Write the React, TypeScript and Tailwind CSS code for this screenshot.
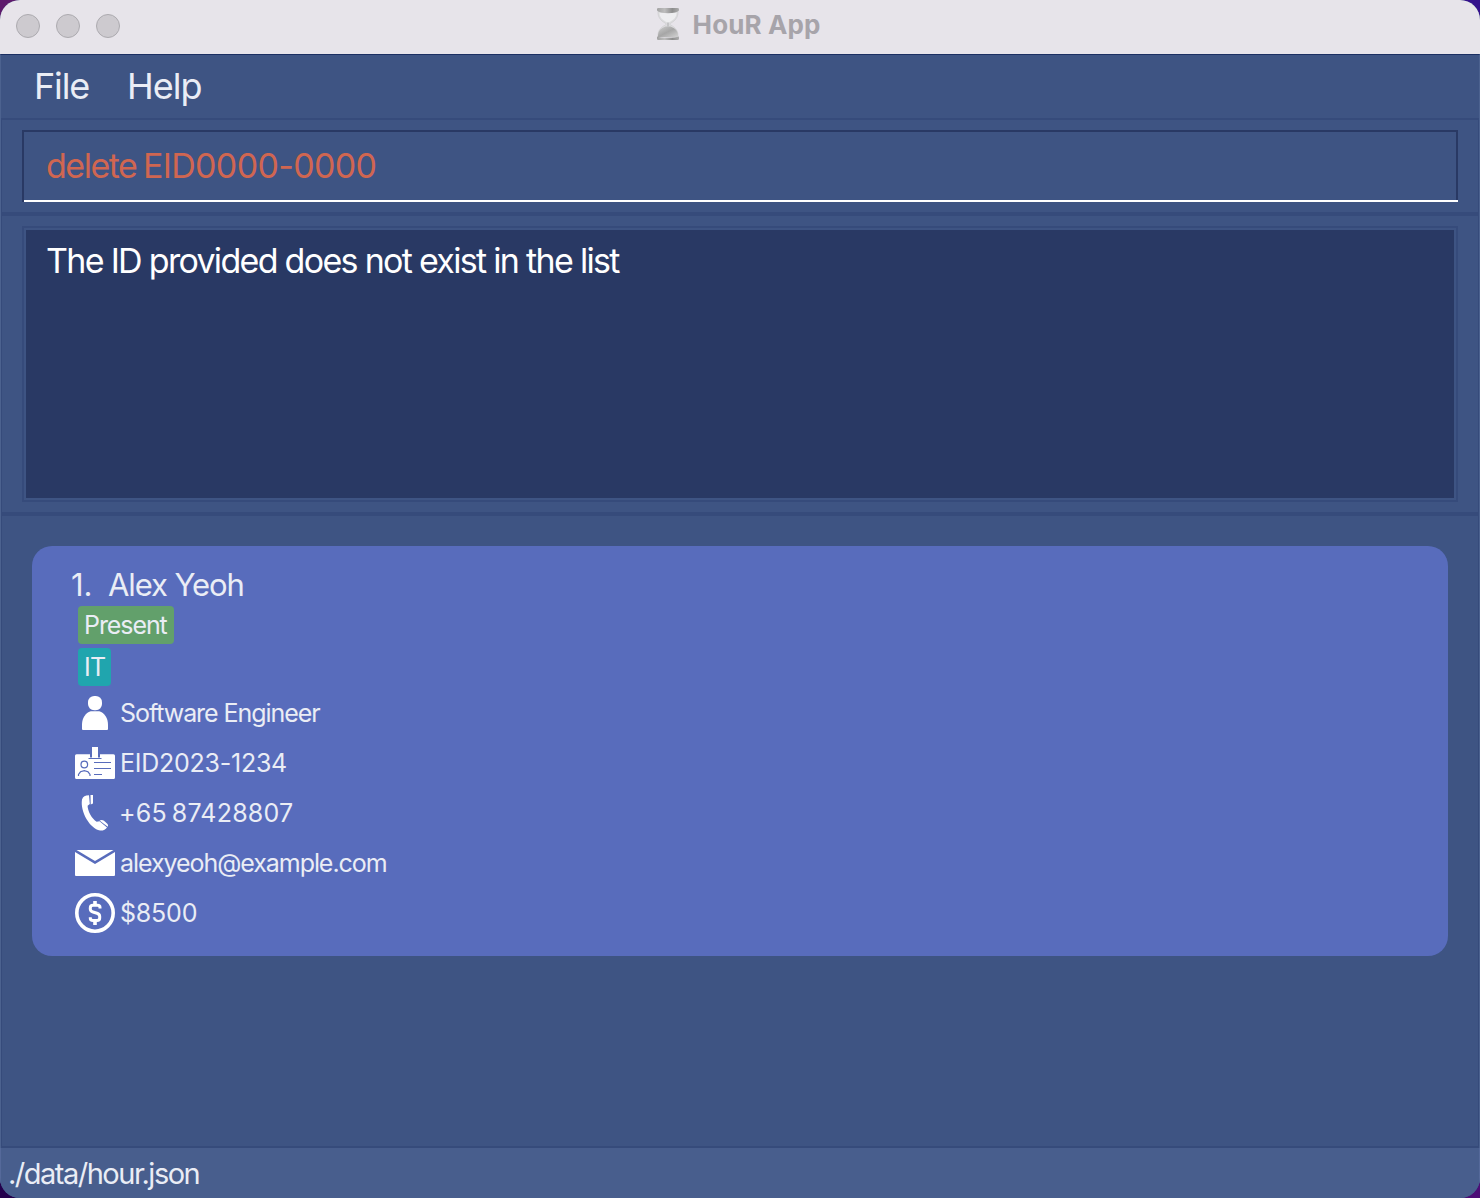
import React from "react";

function Hourglass() {
  return (
    <svg width="24" height="34" viewBox="0 0 24 34" aria-hidden="true">
      <defs>
        <linearGradient id="cap" x1="0" x2="1" y1="0" y2="0">
          <stop offset="0" stopColor="#a3a3a3" />
          <stop offset="0.35" stopColor="#bdbdbd" />
          <stop offset="0.7" stopColor="#8d8d8d" />
          <stop offset="1" stopColor="#adadad" />
        </linearGradient>
        <linearGradient id="sand" x1="0" x2="1" y1="0" y2="1">
          <stop offset="0" stopColor="#cccccc" />
          <stop offset="0.5" stopColor="#a6a6a6" />
          <stop offset="1" stopColor="#d2d2d2" />
        </linearGradient>
      </defs>
      <path
        d="M2 4C1.500 10 4.500 13.500 9 16C10.400 16.800 10.400 17.400 9 18.200C4.500 20.500 1.500 24 2 30H22C22.500 24 19.500 20.500 15 18.200C13.600 17.400 13.600 16.800 15 16C19.500 13.500 22.500 10 22 4Z"
        fill="#dcdcde"
        stroke="#cbcbcd"
        strokeWidth="0.6"
      />
      <path d="M3.500 6H20.500C20.500 11 16.500 13.500 12 16C7.500 13.500 3.500 11 3.500 6Z" fill="#eeeef0" />
      <path d="M2 30C1.500 24 5 21 9.500 19.500H14.500C19 21 22.500 24 22 30Z" fill="url(#sand)" />
      <path d="M11 15.500H13V20H11Z" fill="#c4c4c6" />
      <path d="M1 2Q1 1 2.500 1H21.500Q23 1 23 2V3.600Q20 6.200 12 6.200T1 3.600Z" fill="url(#cap)" />
      <path d="M1 29.500Q4 30.800 12 30.800T23 29.500V32Q23 33 21.500 33H2.500Q1 33 1 32Z" fill="url(#cap)" />
    </svg>
  );
}

function PersonIcon() {
  return (
    <svg width="40" height="40" viewBox="0 0 40 40" fill="white" aria-hidden="true">
      <rect x="13" y="3" width="14" height="14.300" rx="6.200" />
      <path d="M15.700 18.300H24.300C29.500 19.800 33 25.500 33 31.500V36Q33 37 32 37H8Q7 37 7 36V31.500C7 25.500 10.500 19.800 15.700 18.300Z" />
    </svg>
  );
}

function BadgeIcon() {
  return (
    <svg width="40" height="40" viewBox="0 0 40 40" aria-hidden="true">
      <path d="M1.500 11.300H15V14.500H25V11.300H38.500Q40 11.300 40 12.800V34.500Q40 36 38.500 36H1.500Q0 36 0 34.500V12.800Q0 11.300 1.500 11.300Z" fill="white" />
      <rect x="17" y="4" width="6" height="11" fill="white" />
      <g fill="none" stroke="#586cbc" strokeWidth="1.200">
        <path d="M13.500 15.500H26.500M19 19.500H36M19 25.500H36M19 31.500H27" />
        <circle cx="9.300" cy="21.500" r="3.300" />
        <path d="M3.500 33V31.500L5.500 28.800L9.300 27.600L13 28.800L15 31.500V33" />
      </g>
    </svg>
  );
}

function PhoneIcon() {
  return (
    <svg width="40" height="40" viewBox="0 0 40 40" fill="white" aria-hidden="true">
      <path d="M7 6.500C8 3.500 10 2.200 14 2.200L14.800 11L12.600 12.700C12.600 18 17 26 21.700 28.700L24.500 28.200L32 34.500C30.500 36.500 28.500 37.800 25 37.600C15 35.500 5 19 7 6.500Z" />
      <path d="M15.500 2H18V10.500L15.700 11.500Z" />
      <path d="M24.500 27.600C26 26.800 27.500 26.800 29 27.700L32.500 31Q33.500 32.300 32.800 33.700Z" />
    </svg>
  );
}

function MailIcon() {
  return (
    <svg width="40" height="40" viewBox="0 0 40 40" fill="white" aria-hidden="true">
      <path d="M1.500 7H38.500L20 18Z" />
      <path d="M0 9L20 21L40 9V32Q40 33 39 33H1Q0 33 0 32Z" />
    </svg>
  );
}

function DollarIcon() {
  return (
    <svg width="40" height="40" viewBox="0 0 40 40" fill="none" stroke="white" aria-hidden="true">
      <circle cx="20" cy="20" r="18.200" strokeWidth="3.600" />
      <path d="M25 15.500V14.500Q25 12.300 22.500 12.300H18Q15.300 12.300 15.300 15V16Q15.300 18.300 18 19L22 20.300Q24.700 21.200 24.700 23.500V25Q24.700 27.600 22 27.600H18Q15.300 27.600 15.300 25.300V24.300" strokeWidth="3" />
      <path d="M20 8V13M20 27V32" strokeWidth="3.600" />
    </svg>
  );
}

const details = [
  { Icon: PersonIcon, text: "Software Engineer", style: "tracking-[-1.06px] ml-[5px]" },
  { Icon: BadgeIcon, text: "EID2023-1234", style: "tracking-[-0.25px] ml-[5px]" },
  { Icon: PhoneIcon, text: "+65 87428807", style: "tracking-[0.23px] [word-spacing:-2.500px] ml-1" },
  { Icon: MailIcon, text: "alexyeoh@example.com", style: "tracking-[-1.06px] ml-[5px]" },
  { Icon: DollarIcon, text: "$8500", style: "tracking-[-0.2px] ml-[5px]" },
];

export default function App() {
  return (
    <div className="h-[1198px] w-[1480px] overflow-hidden bg-[linear-gradient(90deg,#5e1a6c_50%,#34108c_50%)] font-['Inter',sans-serif] text-[#eaedf5]">
      <div className="h-full bg-[linear-gradient(90deg,#24004c_50%,#4c0d76_50%)] bg-[length:100%_50%] bg-bottom bg-no-repeat">
        <div className="flex h-full flex-col overflow-hidden rounded-[20px] bg-[#3e5483]">
          <header className="relative flex h-[54px] shrink-0 items-center justify-center bg-[#e7e4ea]">
            <div className="absolute left-4 top-[14px] flex gap-4">
              <span className="size-6 rounded-full border border-[#acaaaf] bg-[#cdcacf]" />
              <span className="size-6 rounded-full border border-[#acaaaf] bg-[#cdcacf]" />
              <span className="size-6 rounded-full border border-[#acaaaf] bg-[#cdcacf]" />
            </div>
            <div className="flex items-center gap-[13px] pb-1.5 pr-1">
              <Hourglass />
              <h1 className="pt-0.5 text-[26px] font-bold leading-none tracking-[0.1px] text-[#a7a4aa]">HouR App</h1>
            </div>
          </header>

          <nav className="flex h-16 shrink-0 items-center border-x border-t border-x-[#4c628f] border-t-[#1b2f62] pb-0.5 pl-[33px] text-[36px] leading-none">
            <span className="w-[93px] tracking-[-1.15px]">File</span>
            <span className="tracking-[-1px]">Help</span>
          </nav>

          <div className="flex min-h-0 flex-1 flex-col border-x border-[#4c628f]">
            <main className="flex min-h-0 flex-1 flex-col border-x border-y-2 border-[#364b7b]">
              <section className="h-[92px] px-5 pt-2.5">
                <div className="flex h-[72px] flex-col border-x-2 border-t-2 border-[#293964]">
                  <div className="flex flex-1 items-center pb-px pl-[22px] text-[34px] leading-none text-[#d06651]">
                    <span className="w-[97px] tracking-[-1.5px]">delete</span>
                    <span className="tracking-[-0.67px]">EID0000-0000</span>
                  </div>
                  <div className="-mr-0.5 h-0.5 shrink-0 bg-white" />
                </div>
              </section>

              <section className="h-[304px] border-y-4 border-[#364b7b] px-5 pt-2.5">
                <div className="h-[276px] border-2 border-[#364b7b] p-0.5">
                  <p className="h-full bg-[#293964] pl-5 pt-[11px] text-[34px] leading-10 tracking-[-1.7px] text-white">
                    The ID provided does not exist in the list
                  </p>
                </div>
              </section>

              <section className="px-[30px] pt-[30px]">
                <article className="h-[410px] rounded-[20px] bg-[#586cbc] pl-[43px] pt-[18px]">
                  <h2 className="flex h-[42px] items-center pb-0.5 text-[31px] leading-none">
                    <span className="-ml-1 w-[37px]">1.</span>
                    <span className="tracking-[-1.1px]">Alex Yeoh</span>
                  </h2>
                  <div className="ml-[3px] flex flex-col items-start gap-1 text-[25px] leading-[38px]">
                    <span className="h-[38px] w-24 rounded bg-[#62a06b] pl-1.5 tracking-[-1.08px]">Present</span>
                    <span className="h-[38px] w-[33px] rounded bg-[#20a5ae] pl-1.5 tracking-[-0.7px]">IT</span>
                  </div>
                  <ul className="mt-0.5 text-[25px] leading-none">
                    {details.map(({ Icon, text, style }) => (
                      <li key={text} className="flex h-[50px] items-center">
                        <Icon />
                        <span className={style}>{text}</span>
                      </li>
                    ))}
                  </ul>
                </article>
              </section>
            </main>
          </div>

          <footer className="flex h-[50px] shrink-0 items-center border-x border-[#55699a] bg-[#485e8d] pl-[7px] text-[29px] leading-none tracking-[-1.5px]">
            ./data/hour.json
          </footer>
        </div>
      </div>
    </div>
  );
}
